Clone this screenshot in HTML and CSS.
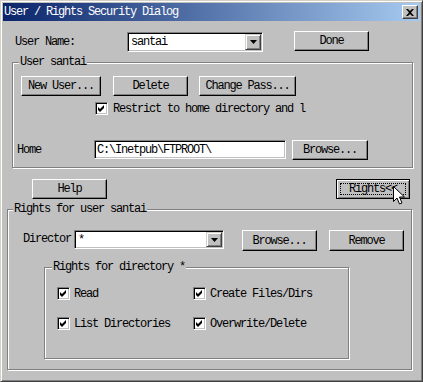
FILE: index.html
```html
<!DOCTYPE html>
<html>
<head>
    <link rel="stylesheet" href="styles.css">
</head>
<body>
    <div class="window">
        <div class="titlebar">
            <span class="title">User / Rights Security Dialog</span>
            <span class="close">
                <svg width="8" height="7" viewBox="0 0 8 7"><path d="M0 0h2l2 2 2-2h2L5 3.5 8 7H6L4 5 2 7H0l3-3.5z" fill="#000"/></svg>
            </span>
        </div>

        <div class="row row-user">
            <span class="label label-user">User Name:</span>
            <div class="combo combo-user">
                <span class="combo-text">santai</span>
                <span class="drop"><svg width="7" height="4" viewBox="0 0 7 4"><path d="M0 0h7L3.5 4z" fill="#000"/></svg></span>
            </div>
            <button class="btn btn-done">Done</button>
        </div>

        <fieldset class="group group-user">
            <legend>User santai</legend>
            <div class="row row-actions">
                <button class="btn btn-new">New User...</button>
                <button class="btn btn-delete">Delete</button>
                <button class="btn btn-pass">Change Pass...</button>
            </div>
            <label class="check check-restrict">
                <span class="box"><svg width="11" height="11" viewBox="1 1 11 11"><path d="M3 5l2 2 4-4v3l-4 4-2-2z" fill="#000"/></svg></span>
                <span>Restrict to home directory and l</span>
            </label>
            <div class="row row-home">
                <span class="label label-home">Home</span>
                <div class="field field-home">C:\Inetpub\FTPROOT\</div>
                <button class="btn btn-browse-home">Browse...</button>
            </div>
        </fieldset>

        <div class="row row-toggle">
            <button class="btn btn-help">Help</button>
            <button class="btn btn-rights"><span>Rights&lt;&lt;</span></button>
            <svg class="cursor" width="12" height="20" viewBox="0 0 12 20">
                <path d="M0.5 0.5v15l3.5-3.5 2.5 6 2.5-1-2.5-6h5z" fill="#fff" stroke="#000" stroke-width="1"/>
            </svg>
        </div>

        <fieldset class="group group-rights">
            <legend>Rights for user santai</legend>
            <div class="row row-dir">
                <span class="label label-dir">Director</span>
                <div class="combo combo-dir">
                    <span class="combo-text">*</span>
                    <span class="drop"><svg width="7" height="4" viewBox="0 0 7 4"><path d="M0 0h7L3.5 4z" fill="#000"/></svg></span>
                </div>
                <button class="btn btn-browse-dir">Browse...</button>
                <button class="btn btn-remove">Remove</button>
            </div>

            <fieldset class="group group-dir">
                <legend>Rights for directory *</legend>
                <div class="checks">
                    <label class="check">
                        <span class="box"><svg width="11" height="11" viewBox="1 1 11 11"><path d="M3 5l2 2 4-4v3l-4 4-2-2z" fill="#000"/></svg></span>
                        <span>Read</span>
                    </label>
                    <label class="check">
                        <span class="box"><svg width="11" height="11" viewBox="1 1 11 11"><path d="M3 5l2 2 4-4v3l-4 4-2-2z" fill="#000"/></svg></span>
                        <span>Create Files/Dirs</span>
                    </label>
                    <label class="check">
                        <span class="box"><svg width="11" height="11" viewBox="1 1 11 11"><path d="M3 5l2 2 4-4v3l-4 4-2-2z" fill="#000"/></svg></span>
                        <span>List Directories</span>
                    </label>
                    <label class="check">
                        <span class="box"><svg width="11" height="11" viewBox="1 1 11 11"><path d="M3 5l2 2 4-4v3l-4 4-2-2z" fill="#000"/></svg></span>
                        <span>Overwrite/Delete</span>
                    </label>
                </div>
            </fieldset>
        </fieldset>
    </div>
</body>
</html>
```

FILE: styles.css
```css
body {
    margin: 0;
    background: #c0c0c0;
    font-family: "Liberation Mono", "DejaVu Sans Mono", monospace;
    font-size: 12px;
    line-height: 12px;
    letter-spacing: -1.2px;
    color: #000;
}

.window {
    width: 423px;
    height: 382px;
    box-sizing: border-box;
    background: #c0c0c0;
    border: 1px solid;
    border-color: #d4d0c8 #404040 #404040 #d4d0c8;
    box-shadow: inset 1px 1px #fff, inset -1px -1px #808080;
    padding: 2px;
    overflow: hidden;
}

.titlebar {
    height: 18px;
    display: flex;
    align-items: center;
    justify-content: space-between;
    padding: 0 2px 0 1px;
    background: linear-gradient(to right, #0a246a, #a6caf0);
    color: #fff;
}

.close {
    width: 16px;
    height: 14px;
    box-sizing: border-box;
    display: flex;
    align-items: center;
    justify-content: center;
    background: #c0c0c0;
    border: 1px solid;
    border-color: #fff #404040 #404040 #fff;
    box-shadow: inset -1px -1px #808080;
}

.row {
    display: flex;
    align-items: center;
}

.label {
    flex: none;
}

/* sunken controls */
.combo,
.field {
    box-sizing: border-box;
    background: #fff;
    border: 1px solid;
    border-color: #808080 #fff #fff #808080;
    box-shadow: inset 1px 1px #000, inset -1px -1px #c0c0c0;
    padding: 1px;
}

.combo {
    display: flex;
    align-items: stretch;
}

.combo-text {
    flex: 1;
    display: flex;
    align-items: center;
    padding-left: 2px;
}

.drop {
    width: 16px;
    box-sizing: border-box;
    display: flex;
    align-items: center;
    justify-content: center;
    background: #c0c0c0;
    border: 1px solid;
    border-color: #d4d0c8 #404040 #404040 #d4d0c8;
    box-shadow: inset 1px 1px #fff, inset -1px -1px #808080;
}

.field {
    display: flex;
    align-items: center;
    padding-left: 2px;
}

/* raised buttons */
.btn {
    box-sizing: border-box;
    height: 20px;
    padding: 0;
    font: inherit;
    letter-spacing: inherit;
    color: #000;
    background: #c0c0c0;
    border: 1px solid;
    border-color: #fff #000 #000 #fff;
    box-shadow: inset -1px -1px #808080;
}

/* etched group boxes */
.group {
    box-sizing: border-box;
    margin: 0;
    padding: 0;
    min-width: 0;
    border: 1px solid #808080;
    box-shadow: inset 1px 1px #fff, 1px 1px #fff;
}

.group legend {
    padding: 0 1px;
    line-height: 12px;
    background: #c0c0c0;
}

/* checkboxes */
.check {
    display: flex;
    align-items: center;
    gap: 4px;
}

.box {
    width: 13px;
    height: 13px;
    box-sizing: border-box;
    flex: none;
    background: #fff;
    border: 1px solid;
    border-color: #808080 #fff #fff #808080;
    box-shadow: inset 1px 1px #000, inset -1px -1px #c0c0c0;
}

.box svg {
    display: block;
}

/* top row */
.row-user {
    margin-top: 10px;
    align-items: flex-start;
}

.label-user {
    width: 112px;
    margin: 5px 0 0 12px;
}

.combo-user {
    width: 136px;
    height: 20px;
    margin-top: 1px;
}

.btn-done {
    width: 75px;
    margin-left: 31px;
}

/* user group */
.group-user {
    width: 401px;
    margin: 4px 0 0 9px;
    padding-bottom: 7px;
}

.group-user legend {
    margin-left: 6px;
}

.row-actions {
    margin: 8px 0 0 8px;
    gap: 12px;
}

.btn-new {
    width: 80px;
}

.btn-delete {
    width: 75px;
}

.btn-pass {
    width: 97px;
    margin-left: -1px;
}

.check-restrict {
    margin: 6px 0 0 82px;
    gap: 5px;
}

.row-home {
    margin: 25px 0 0 4px;
    align-items: flex-start;
}

.label-home {
    width: 77px;
    margin-top: 4px;
}

.field-home {
    width: 192px;
    height: 19px;
}

.btn-browse-home {
    width: 76px;
    margin-left: 6px;
}

/* help / rights row */
.row-toggle {
    position: relative;
    margin-top: 11px;
}

.btn-help {
    width: 75px;
    margin-left: 29px;
}

.btn-rights {
    width: 74px;
    margin-left: 229px;
    border: 1px solid #000;
    box-shadow: inset 1px 1px #fff, inset -1px -1px #808080, inset -2px -2px #c0c0c0;
    position: relative;
}

.btn-rights::after {
    content: "";
    position: absolute;
    left: 3px;
    top: 3px;
    right: 3px;
    bottom: 3px;
    border: 1px dotted #000;
}

.cursor {
    position: absolute;
    left: 390px;
    top: 7px;
}

/* rights group */
.group-rights {
    width: 405px;
    margin: 4px 0 0 4px;
    padding-bottom: 10px;
}

.group-rights legend {
    margin-left: 5px;
}

.row-dir {
    margin: 15px 0 0 15px;
    align-items: flex-start;
}

.label-dir {
    width: 51px;
    margin-top: 3px;
}

.combo-dir {
    width: 150px;
    height: 19px;
}

.btn-browse-dir {
    width: 75px;
    height: 21px;
    margin-left: 18px;
}

.btn-remove {
    width: 75px;
    height: 21px;
    margin-left: 12px;
}

.group-dir {
    width: 305px;
    margin: 10px 0 0 36px;
    padding-bottom: 28px;
}

.group-dir legend {
    margin-left: 7px;
}

.checks {
    display: grid;
    grid-template-columns: 136px auto;
    row-gap: 17px;
    margin: 14px 0 0 12px;
}

.checks .check {
    height: 13px;
}
```
